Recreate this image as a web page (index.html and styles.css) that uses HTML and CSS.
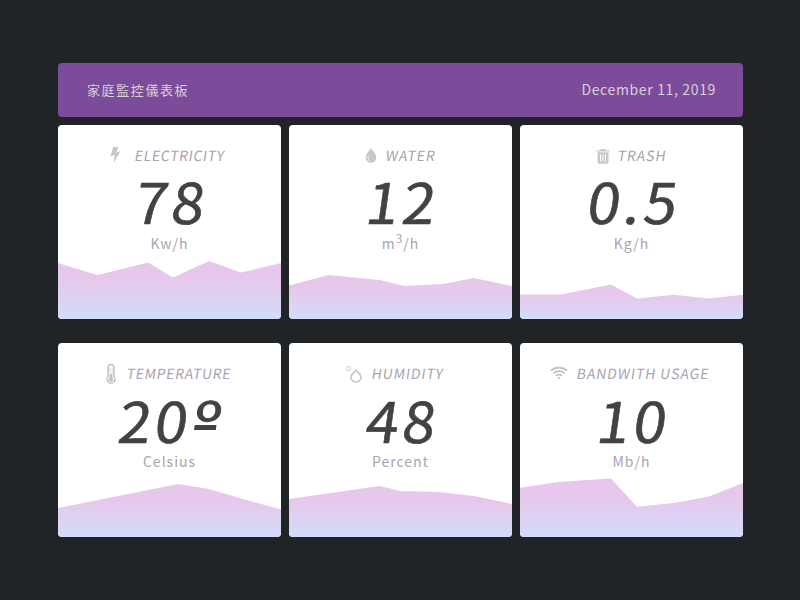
FILE: index.html
```html
<!DOCTYPE html>
<html lang="zh-Hant">
<head>
<meta charset="utf-8">
<title>家庭監控儀表板</title>
<link rel="stylesheet" href="styles.css">
</head>
<body>
<svg class="defs" width="0" height="0" aria-hidden="true">
  <defs>
    <linearGradient id="area" x1="0" y1="0" x2="0" y2="1">
      <stop offset=".32" stop-color="#e7c8ec"/>
      <stop offset="1" stop-color="#d2dcf9"/>
    </linearGradient>
  </defs>
</svg>
<main class="dashboard">
  <header class="bar"><h1>家庭監控儀表板</h1><time>December 11, 2019</time></header>
  <section class="cards">
    <article class="card electricity">
      <h2 class="label"><svg class="icon" viewBox="0 0 22 22"><path d="M8 3h5.500l-2 5.500 4-1.500-6.700 12 .8-8-4 1.500z" fill="#c9c9c9"/></svg><span>ELECTRICITY</span></h2>
      <p class="value"><span>78</span></p>
      <p class="unit">Kw/h</p>
      <svg class="chart" viewBox="0 0 223 194"><path d="M0 138L39.5 150 90 137.5 115 152.5 151 136 183 147.5 223 138V194H0z"/></svg>
    </article>
    <article class="card water">
      <h2 class="label"><svg class="icon" viewBox="0 0 22 22"><path d="M11 4C9.500 7 5.700 9.500 5.700 13.500a5.300 5.300 0 0 0 10.600 0C16.300 9.500 12.500 7 11 4z" fill="#c9c9c9"/><path d="M8 11.500v3q.5 2 2 2.500" fill="none" stroke="#eee"/></svg><span>WATER</span></h2>
      <p class="value"><span>12</span></p>
      <p class="unit">m<sup>3</sup>/h</p>
      <svg class="chart" viewBox="0 0 223 194"><path d="M0 160.500L39.500 150 91 155 115 161 154 159 184.500 153 223 161V194H0z"/></svg>
    </article>
    <article class="card trash">
      <h2 class="label"><svg class="icon" viewBox="0 0 22 22"><path d="M4.500 7.500V6.300h4V5h5v1.300h4v1.200zM5.500 8.200h11V18q0 1.800-1.800 1.800H7.300q-1.800 0-1.800-1.800z" fill="#c9c9c9"/><path d="M8.500 10.500v7M11 10.500v7M13.500 10.500v7" stroke="#fff"/></svg><span>TRASH</span></h2>
      <p class="value"><span>0.5</span></p>
      <p class="unit">Kg/h</p>
      <svg class="chart" viewBox="0 0 223 194"><path d="M0 169.500H41L91 159.500 117 173.500 154 169.700 189 173.500 223 169.700V194H0z"/></svg>
    </article>
    <article class="card temperature">
      <h2 class="label"><svg class="icon" viewBox="0 0 22 22"><path d="M8.200 14.500V5.300a2.800 2.800 0 0 1 5.600 0v9.200a3.900 3.900 0 1 1-5.600 0z" fill="#fff" stroke="#c4c2c8" stroke-width="1.600"/><path d="M11 12v6" stroke="#c4c2c8" stroke-width="2.600"/><circle cx="11" cy="17.500" r="2.200" fill="#c4c2c8"/><path d="M10 6v6M12 6v6" stroke="#ddd" stroke-width=".8"/></svg><span>TEMPERATURE</span></h2>
      <p class="value"><span>20<i class="degree">º</i></span></p>
      <p class="unit">Celsius</p>
      <svg class="chart" viewBox="0 0 223 194"><path d="M0 165L120 141 151 146 183 155.500 223 166.500V194H0z"/></svg>
    </article>
    <article class="card humidity">
      <h2 class="label"><svg class="icon" viewBox="0 0 22 22"><circle cx="5.500" cy="6.500" r="2.200" fill="none" stroke="#c9c9c9"/><path d="M13 8.200C11.500 10.500 7.800 12 7.800 15a5.200 5 0 0 0 10.400 0c0-3-3.700-4.500-5.200-6.800z" fill="none" stroke="#c9c9c9" stroke-width="1.700"/></svg><span>HUMIDITY</span></h2>
      <p class="value"><span>48</span></p>
      <p class="unit">Percent</p>
      <svg class="chart" viewBox="0 0 223 194"><path d="M0 156L90.500 143 112 148 150 149 185 153 223 161V194H0z"/></svg>
    </article>
    <article class="card bandwidth">
      <h2 class="label"><svg class="icon" viewBox="0 0 22 22"><path d="M2.700 8.500q8.300-6 16.600 0M5.200 11.200q5.800-4.200 11.600 0M7.900 13.700q3.100-2.200 6.200 0" fill="none" stroke="#c4c4c4" stroke-width="1.900"/><path d="M9.300 15.500q1.700-1 3.400 0L11 17.500z" fill="#c4c4c4"/></svg><span>BANDWITH USAGE</span></h2>
      <p class="value"><span>10</span></p>
      <p class="unit">Mb/h</p>
      <svg class="chart" viewBox="0 0 223 194"><path d="M0 144.700L38 139 91 135.500 117 163.700 154 160 189 153.500 223 140V194H0z"/></svg>
    </article>
  </section>
</main>
</body>
</html>
```
FILE: styles.css
```css
* { box-sizing: border-box; margin: 0; padding: 0; }
body {
  height: 600px;
  overflow: hidden;
  background: #212426;
  font-family: "Noto Sans CJK TC", "Noto Sans", sans-serif;
}
.defs { position: absolute; }
.dashboard { width: 685px; margin: 63px 0 0 58px; }
.bar {
  display: flex;
  align-items: center;
  justify-content: space-between;
  height: 54px;
  padding: 0 27px 2px 29px;
  margin-bottom: 8px;
  border-radius: 4px;
  background: #7c4b99;
  color: #d9d0d6;
}
.bar h1 { font-size: 13px; font-weight: 400; letter-spacing: 1.6px; }
.bar time { font-size: 14px; letter-spacing: .65px; }
.cards { display: grid; grid-template-columns: repeat(3, 223px); gap: 24px 8px; }
.card {
  position: relative;
  height: 194px;
  overflow: hidden;
  border-radius: 4px;
  background: #fff;
  text-align: center;
}
.label {
  display: flex;
  align-items: center;
  height: 22px;
  margin-top: 19px;
  font-size: 14px;
  font-weight: 400;
  line-height: 22px;
  letter-spacing: .9px;
  color: #aaa3b2;
  white-space: nowrap;
}
.label span { display: inline-block; transform: translateY(-.5px) skewX(-9deg); }
.value span { display: inline-block; transform: skewX(-8deg) scaleX(1.05); }
.icon { flex: none; width: 22px; height: 22px; }
.value {
  height: 66px;
  padding-left: 7px;
  font-size: 56px;
  line-height: 67px;
  letter-spacing: 3.5px;
  color: #424242;
  -webkit-text-stroke: .6px #424242;
}
.temperature .value, .humidity .value, .bandwidth .value { line-height: 69px; }
.degree {
  position: relative;
  display: inline-block;
  height: 69px;
  margin-left: 4px;
  font-style: normal;
  letter-spacing: 0;
  vertical-align: top;
  transform: translateY(3px) scaleX(1.15);
  -webkit-text-stroke-width: .8px;
}
.degree::after {
  content: "";
  position: absolute;
  left: 1px;
  top: 38px;
  width: 18px;
  height: 5px;
  background: #424242;
}
.unit { height: 22px; font-size: 14px; line-height: 23px; letter-spacing: 1px; color: #aaa3b2; }
.unit sup { font-size: 12px; line-height: 0; vertical-align: 6px; }
.chart { position: absolute; inset: 0; width: 223px; height: 194px; fill: url(#area); }

.electricity .label { padding-left: 47px; gap: 8px; letter-spacing: .65px; }
.water .label { padding-left: 71px; gap: 4px; }
.trash .label { padding-left: 72px; gap: 4px; }
.temperature .label { padding-left: 42px; gap: 5px; letter-spacing: .65px; }
.temperature .value { padding-left: 1px; }
.humidity .label { padding-left: 54px; gap: 7px; letter-spacing: .85px; }
.bandwidth .label { padding-left: 28px; gap: 7px; }
```
